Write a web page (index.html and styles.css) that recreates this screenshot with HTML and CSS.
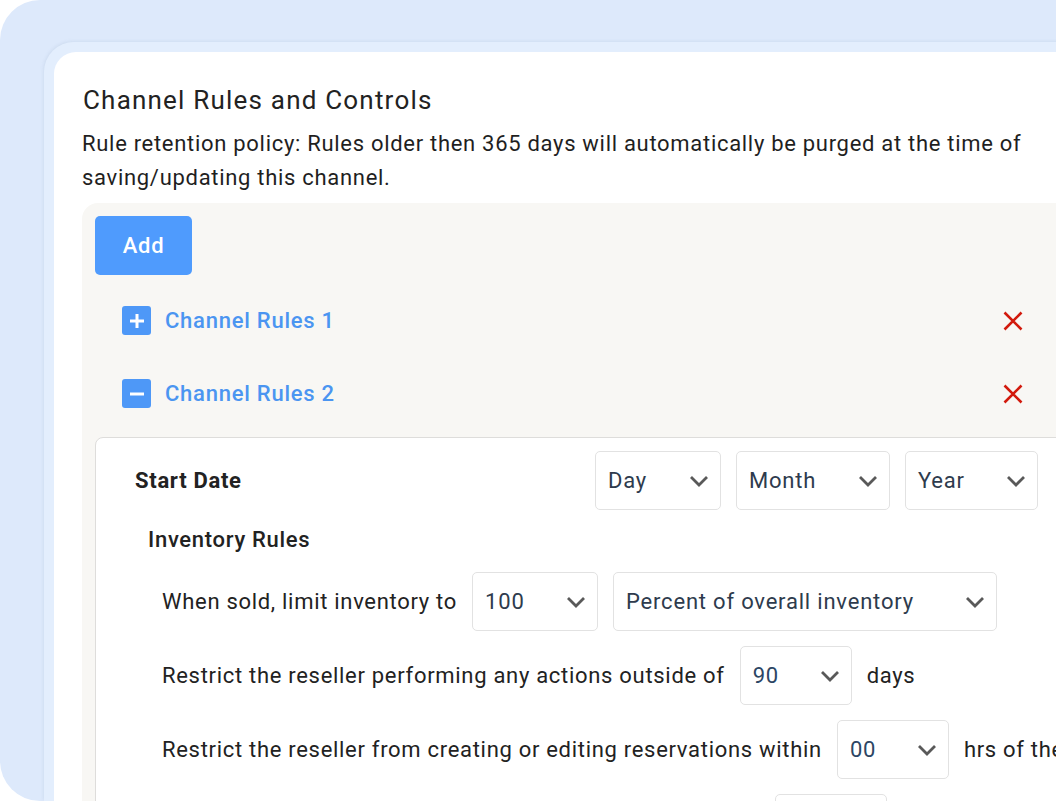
FILE: index.html
```html
<!DOCTYPE html>
<html>
<head>
<meta charset="utf-8">
<link rel="stylesheet" href="styles.css">
</head>
<body>
<div class="frame">
  <div class="layer">
    <div class="card">
      <h1 class="title">Channel Rules and Controls</h1>
      <p class="policy">Rule retention policy: Rules older then 365 days will automatically be purged at the time of saving/updating this channel.</p>
      <div class="panel">
        <button class="add">Add</button>
        <div class="rule-row">
          <span class="toggle"><svg width="16" height="16" viewBox="0 0 16 16"><path d="M8 1v14M1 8h14" stroke="#fff" stroke-width="3" fill="none"/></svg></span>
          <span class="rule-name">Channel Rules 1</span>
          <svg class="remove" width="20" height="20" viewBox="0 0 20 20"><path d="M1.5 1.5L18.5 18.5M18.5 1.5L1.5 18.5" stroke="#d21a0d" stroke-width="2.6" fill="none"/></svg>
        </div>
        <div class="rule-row">
          <span class="toggle"><svg width="16" height="16" viewBox="0 0 16 16"><path d="M1 8h14" stroke="#fff" stroke-width="3" fill="none"/></svg></span>
          <span class="rule-name">Channel Rules 2</span>
          <svg class="remove" width="20" height="20" viewBox="0 0 20 20"><path d="M1.5 1.5L18.5 18.5M18.5 1.5L1.5 18.5" stroke="#d21a0d" stroke-width="2.6" fill="none"/></svg>
        </div>
        <div class="rule-box">
          <div class="date-row">
            <span class="date-label">Start Date</span>
            <div class="sel w-day"><span>Day</span><svg class="chev" width="20" height="12" viewBox="0 0 20 12"><path d="M2 2l8 8 8-8" stroke="#595959" stroke-width="2.8" fill="none"/></svg></div>
            <div class="sel w-month"><span>Month</span><svg class="chev" width="20" height="12" viewBox="0 0 20 12"><path d="M2 2l8 8 8-8" stroke="#595959" stroke-width="2.8" fill="none"/></svg></div>
            <div class="sel w-year"><span>Year</span><svg class="chev" width="20" height="12" viewBox="0 0 20 12"><path d="M2 2l8 8 8-8" stroke="#595959" stroke-width="2.8" fill="none"/></svg></div>
          </div>
          <h2 class="section">Inventory Rules</h2>
          <div class="line">
            <span>When sold, limit inventory to</span>
            <div class="sel w-num"><span>100</span><svg class="chev" width="20" height="12" viewBox="0 0 20 12"><path d="M2 2l8 8 8-8" stroke="#595959" stroke-width="2.8" fill="none"/></svg></div>
            <div class="sel w-wide"><span>Percent of overall inventory</span><svg class="chev" width="20" height="12" viewBox="0 0 20 12"><path d="M2 2l8 8 8-8" stroke="#595959" stroke-width="2.8" fill="none"/></svg></div>
          </div>
          <div class="line">
            <span>Restrict the reseller performing any actions outside of</span>
            <div class="sel w-small"><span class="blue">90</span><svg class="chev" width="20" height="12" viewBox="0 0 20 12"><path d="M2 2l8 8 8-8" stroke="#595959" stroke-width="2.8" fill="none"/></svg></div>
            <span>days</span>
          </div>
          <div class="line">
            <span>Restrict the reseller from creating or editing reservations within</span>
            <div class="sel w-small"><span class="blue">00</span><svg class="chev" width="20" height="12" viewBox="0 0 20 12"><path d="M2 2l8 8 8-8" stroke="#595959" stroke-width="2.8" fill="none"/></svg></div>
            <span>hrs of the arrival date</span>
          </div>
          <div class="line">
            <span class="fixed-label">Restrict cancellations within</span>
            <div class="sel w-small"><span class="blue">00</span><svg class="chev" width="20" height="12" viewBox="0 0 20 12"><path d="M2 2l8 8 8-8" stroke="#595959" stroke-width="2.8" fill="none"/></svg></div>
            <span>hrs</span>
          </div>
        </div>
      </div>
    </div>
  </div>
</div>
</body>
</html>
```

FILE: styles.css
```css
* { box-sizing: border-box; }
html, body {
  margin: 0;
  padding: 0;
  background: #ffffff;
  width: 1056px;
  height: 801px;
  overflow: hidden;
  font-family: Roboto, "Liberation Sans", sans-serif;
  color: #222222;
}
.frame {
  width: 1200px;
  height: 801px;
  background: #dde9fb;
  border-radius: 40px 0 0 40px;
  padding: 42px 0 0 44px;
}
.layer {
  height: 100%;
  background: #e3eefd;
  border-radius: 30px 0 0 0;
  padding: 10px 0 0 10px;
  box-shadow: -1px -1px 3px rgba(150, 170, 200, 0.18);
}
.card {
  height: 100%;
  background: #ffffff;
  border-radius: 22px 0 0 0;
  padding: 31px 0 0 28px;
  overflow: hidden;
}
.title {
  margin: 0 0 0 1px;
  font-size: 26px;
  font-weight: 400;
  line-height: 34px;
  letter-spacing: 1.2px;
  color: #222222;
}
.policy {
  margin: 10px 0 0 0;
  width: 960px;
  font-size: 22px;
  letter-spacing: 0.7px;
  line-height: 34px;
  color: #1f1f1f;
}
.panel {
  margin-top: 8px;
  width: 1000px;
  background: #f8f7f4;
  border-radius: 16px 0 0 0;
  padding: 13px 0 0 13px;
  min-height: 700px;
}
.add {
  display: block;
  width: 97px;
  height: 59px;
  border: none;
  border-radius: 5px;
  background: #4f9bfd;
  color: #ffffff;
  font-family: Roboto, "Liberation Sans", sans-serif;
  font-size: 22px;
  letter-spacing: 0.7px;
  font-weight: 500;
  padding: 0;
}
.rule-row {
  height: 73px;
  display: flex;
  align-items: center;
  padding: 0 59px 0 27px;
}
.add + .rule-row { margin-top: 9px; }
.toggle {
  width: 29px;
  height: 29px;
  border-radius: 3px;
  background: #4e98f7;
  display: flex;
  align-items: center;
  justify-content: center;
  margin-right: 14px;
}
.rule-name {
  font-size: 22px;
  font-weight: 500;
  color: #4b95f1;
  letter-spacing: 0.75px;
}
.remove { margin-left: auto; }
.rule-box {
  margin-top: 7px;
  background: #ffffff;
  border: 1px solid #dedddb;
  border-radius: 8px 0 0 0;
  padding: 13px 0 0 39px;
  min-height: 500px;
}
.date-row {
  display: flex;
  align-items: center;
  gap: 15px;
}
.date-label {
  width: 445px;
  font-size: 22px;
  letter-spacing: 0.7px;
  font-weight: 700;
  color: #222222;
}
.sel {
  height: 59px;
  border: 1px solid #e2e2e2;
  border-radius: 5px;
  background: #ffffff;
  display: flex;
  align-items: center;
  justify-content: space-between;
  padding: 0 11px 0 12px;
  font-size: 22px;
  letter-spacing: 0.8px;
  color: #2e3b4d;
  flex: none;
}
.sel .blue { color: #2c4664; }
.w-day { width: 126px; }
.w-month { width: 154px; }
.w-year { width: 133px; }
.w-num { width: 126px; }
.w-wide { width: 384px; }
.w-small { width: 112px; }
.section {
  margin: 13px 0 0 13px;
  font-size: 22px;
  letter-spacing: 0.7px;
  font-weight: 500;
  line-height: 34px;
  color: #222222;
}
.line {
  display: flex;
  align-items: center;
  gap: 15px;
  margin: 15px 0 0 27px;
  font-size: 22px;
  letter-spacing: 0.7px;
  color: #222222;
  white-space: nowrap;
}
.fixed-label { width: 598px; }
```
